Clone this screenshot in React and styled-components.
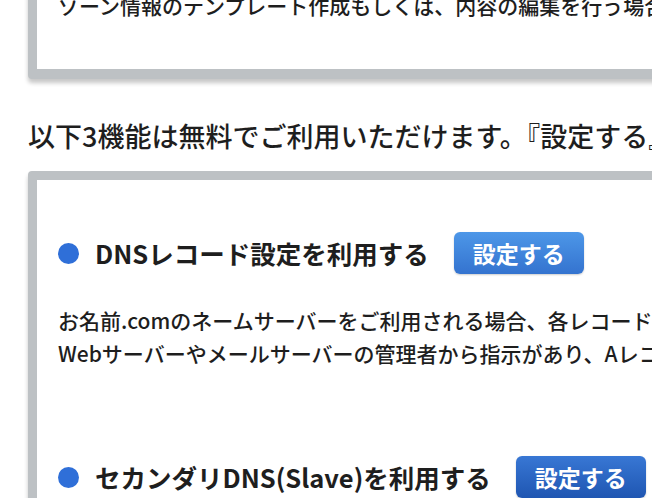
import React from "react";
import styled, { createGlobalStyle } from "styled-components";

const GlobalStyle = createGlobalStyle`
  html, body {
    margin: 0;
    padding: 0;
    background: #ffffff;
    overflow: hidden;
  }
  body {
    font-family: "Noto Sans CJK JP", "Noto Sans", sans-serif;
    color: #1e1e1e;
  }
`;

const Page = styled.div`
  width: 1100px;
  padding-left: 28px;
  margin-top: -20px;
  display: flex;
  flex-direction: column;
`;

const Card = styled.section`
  background: #ffffff;
  border: 9px solid #bdc1c4;
  border-bottom-width: 10px;
  border-radius: 4px;
  box-shadow: 0 4px 4px rgba(0, 0, 0, 0.22);
  padding: ${(p) => p.$pad};
`;

const Text = styled.p`
  margin: 0;
  font-size: 21px;
  line-height: 33px;
  font-weight: 500;
  color: #1e1e1e;
  white-space: nowrap;
`;

const Heading = styled.h2`
  margin: 38px 0 16px;
  font-size: 27px;
  line-height: 38px;
  font-weight: 500;
  color: #1e1e1e;
  white-space: nowrap;
`;

const Feature = styled.div`
  display: flex;
  flex-direction: column;
  gap: 30px;
  margin-bottom: ${(p) => p.$mb || 0}px;
`;

const TitleRow = styled.div`
  display: flex;
  align-items: center;
  gap: 25px;
`;

const Title = styled.h3`
  margin: 0;
  display: flex;
  align-items: center;
  gap: 16px;
  font-size: 25.5px;
  line-height: 36px;
  font-weight: 700;
  color: #1e1e1e;
  white-space: nowrap;
`;

const Bullet = styled.span`
  width: 21px;
  height: 21px;
  border-radius: 50%;
  background: #2f6fd8;
  flex: none;
`;

const SetButton = styled.button`
  height: 42px;
  padding: 0 19px;
  border: none;
  border-radius: 6px;
  font-family: inherit;
  font-size: 23px;
  font-weight: 700;
  color: #ffffff;
  cursor: pointer;
  background: ${(p) =>
    p.$dark
      ? "linear-gradient(#3877d4, #1f56b2)"
      : "linear-gradient(#4d97e8, #3473cf)"};
  box-shadow: 0 1px 2px rgba(0, 0, 0, 0.2);
`;

export default function App() {
  return (
    <>
      <GlobalStyle />
      <Page>
        <Card $pad="0 21px 47px">
          <Text>ゾーン情報のテンプレート作成もしくは、内容の編集を行う場合は、こちらから設定してください。</Text>
        </Card>
        <Heading>以下3機能は無料でご利用いただけます。『設定する』ボタンから設定を行ってください。</Heading>
        <Card $pad="52px 21px 40px">
          <Feature $mb={86}>
            <TitleRow>
              <Title>
                <Bullet />
                DNSレコード設定を利用する
              </Title>
              <SetButton>設定する</SetButton>
            </TitleRow>
            <div>
              <Text>お名前.comのネームサーバーをご利用される場合、各レコード情報の設定が可能です。</Text>
              <Text>Webサーバーやメールサーバーの管理者から指示があり、Aレコード等を設定する場合にご利用ください。</Text>
            </div>
          </Feature>
          <Feature>
            <TitleRow $wide>
              <Title>
                <Bullet />
                セカンダリDNS(Slave)を利用する
              </Title>
              <SetButton $dark>設定する</SetButton>
            </TitleRow>
          </Feature>
        </Card>
      </Page>
    </>
  );
}
